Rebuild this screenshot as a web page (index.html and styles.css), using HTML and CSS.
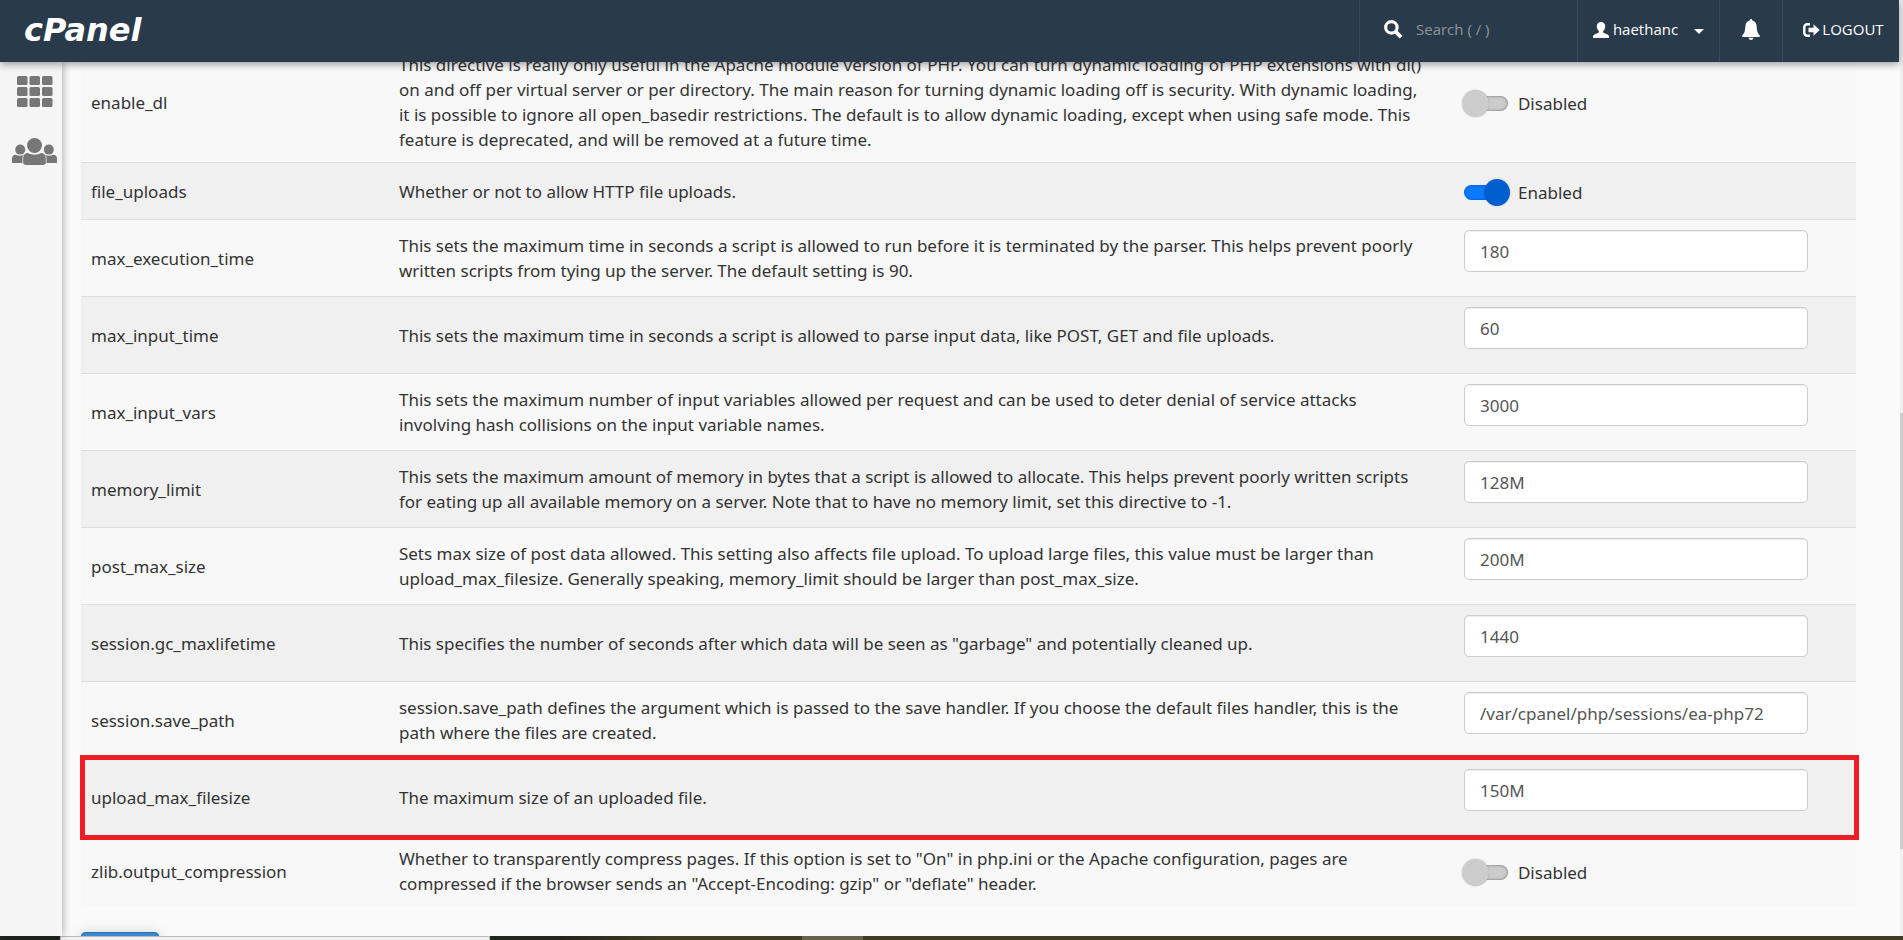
FILE: index.html
```html
<!DOCTYPE html>
<html lang="en">
<head>
<meta charset="utf-8">
<title>cPanel - MultiPHP INI Editor</title>
<link rel="stylesheet" href="styles.css">
</head>
<body>
<div class="window">
  <div class="app">
    <header class="topbar">
      <a class="logo" href="#">cPanel</a>
      <div class="search">
        <svg class="icon-search" viewBox="0 0 18 18" aria-hidden="true"><circle cx="7" cy="7" r="5.4" fill="none" stroke="#fff" stroke-width="3"/><path d="M11 11l5.2 5.2" stroke="#fff" stroke-width="3.6"/></svg>
        <input class="search-input" type="text" placeholder="Search ( / )" aria-label="Search">
      </div>
      <button class="nav-item user" type="button">
        <svg class="icon-user" viewBox="0 0 16 16" aria-hidden="true"><path fill="#fff" d="M8 0c2.600 0 4.200 1.700 4.200 4.300 0 2-.8 3.700-1.900 4.700-.4.400-.3 1.400.2 1.700l4 1.800c1 .5 1.500 1.200 1.500 2.200V16H0v-1.300c0-1 .5-1.700 1.500-2.200l4-1.800c.5-.3.6-1.300.2-1.700C4.600 8 3.800 6.300 3.800 4.300 3.800 1.700 5.400 0 8 0z"/></svg>
        <span class="user-name">haethanc</span>
        <span class="caret"></span>
      </button>
      <button class="nav-item bell" type="button" aria-label="Notifications">
        <svg class="icon-bell" viewBox="0 0 18 21" aria-hidden="true"><path fill="#fff" d="M9 0c.8 0 1.300.7 1.300 1.600C13 2.300 14.400 4.500 14.600 7c.3 4.500.7 6.800 2.900 9.200.8.900.5 1.800-.6 1.800H1.100C0 18-.3 17.100.5 16.200 2.700 13.800 3.100 11.500 3.400 7c.2-2.500 1.600-4.700 4.300-5.400C7.700.7 8.200 0 9 0zM6.600 18.800h4.800C11.200 20.200 10.200 21 9 21s-2.200-.8-2.400-2.200z"/></svg>
      </button>
      <a class="nav-item logout" href="#">
        <svg class="icon-logout" viewBox="0 0 17 14" aria-hidden="true"><path d="M7 1.300H4.200A2.900 2.900 0 0 0 1.300 4.200v5.600a2.900 2.900 0 0 0 2.900 2.900H7" fill="none" stroke="#fff" stroke-width="2.400"/><path fill="#fff" d="M5.500 4.700h5V1.300L16.700 7l-6.200 5.700V9.300h-5z"/></svg>
        <span>LOGOUT</span>
      </a>
    </header>
    <div class="body">
      <nav class="sidebar">
        <a class="side-link" href="#" aria-label="Home">
          <svg class="icon-grid" viewBox="0 0 36 31" aria-hidden="true"><g fill="#777"><rect width="10.500" height="9" rx="1.500"/><rect x="12.500" width="10.500" height="9" rx="1.500"/><rect x="25" width="10.500" height="9" rx="1.500"/><rect y="11" width="10.500" height="9" rx="1.500"/><rect x="12.500" y="11" width="10.500" height="9" rx="1.500"/><rect x="25" y="11" width="10.500" height="9" rx="1.500"/><rect y="22" width="10.500" height="9" rx="1.500"/><rect x="12.500" y="22" width="10.500" height="9" rx="1.500"/><rect x="25" y="22" width="10.500" height="9" rx="1.500"/></g></svg>
        </a>
        <a class="side-link" href="#" aria-label="User manager">
          <svg class="icon-people" viewBox="0 0 45 27" aria-hidden="true"><g fill="#777"><circle cx="8.200" cy="11.600" r="5"/><circle cx="36.800" cy="11.600" r="5"/><path d="M0 25v-4.500C0 18.300 1.500 16.700 3.700 16.700c2.600 1.400 5.600 1.500 8.300.1-1 1-1.400 2-1.500 3.200V25zM45 25v-4.500c0-2.200-1.500-3.800-3.700-3.800-2.600 1.400-5.600 1.500-8.300.1 1 1 1.400 2 1.500 3.200V25z"/><circle cx="22.500" cy="7.500" r="7.500"/><path d="M11.200 24.500V20c0-3 1.800-5 4.800-5 3.800 2.200 9.200 2.200 13 0 3 0 4.800 2 4.800 5v4.500c0 1.500-1 2.500-2.500 2.500H13.700c-1.500 0-2.500-1-2.500-2.500z"/></g></svg>
        </a>
      </nav>
      <main class="content">
        <table class="directives">
          <colgroup><col class="col-name"><col class="col-info"><col class="col-setting"></colgroup>
          <tbody>
            <tr>
              <td>enable_dl</td>
              <td class="info">This directive is really only useful in the Apache module version of PHP. You can turn dynamic loading of PHP extensions with dl() on and off per virtual server or per directory. The main reason for turning dynamic loading off is security. With dynamic loading, it is possible to ignore all open_basedir restrictions. The default is to allow dynamic loading, except when using safe mode. This feature is deprecated, and will be removed at a future time.</td>
              <td><label class="switch"><input class="toggle" type="checkbox">Disabled</label></td>
            </tr>
            <tr>
              <td>file_uploads</td>
              <td class="info">Whether or not to allow HTTP file uploads.</td>
              <td><label class="switch"><input class="toggle" type="checkbox" checked>Enabled</label></td>
            </tr>
            <tr>
              <td><label for="max_execution_time">max_execution_time</label></td>
              <td class="info">This sets the maximum time in seconds a script is allowed to run before it is terminated by the parser. This helps prevent poorly written scripts from tying up the server. The default setting is 90.</td>
              <td><input class="field" id="max_execution_time" type="text" value="180"></td>
            </tr>
            <tr>
              <td><label for="max_input_time">max_input_time</label></td>
              <td class="info">This sets the maximum time in seconds a script is allowed to parse input data, like POST, GET and file uploads.</td>
              <td><input class="field" id="max_input_time" type="text" value="60"></td>
            </tr>
            <tr>
              <td><label for="max_input_vars">max_input_vars</label></td>
              <td class="info">This sets the maximum number of input variables allowed per request and can be used to deter denial of service attacks involving hash collisions on the input variable names.</td>
              <td><input class="field" id="max_input_vars" type="text" value="3000"></td>
            </tr>
            <tr>
              <td><label for="memory_limit">memory_limit</label></td>
              <td class="info">This sets the maximum amount of memory in bytes that a script is allowed to allocate. This helps prevent poorly written scripts for eating up all available memory on a server. Note that to have no memory limit, set this directive to -1.</td>
              <td><input class="field" id="memory_limit" type="text" value="128M"></td>
            </tr>
            <tr>
              <td><label for="post_max_size">post_max_size</label></td>
              <td class="info">Sets max size of post data allowed. This setting also affects file upload. To upload large files, this value must be larger than upload_max_filesize. Generally speaking, memory_limit should be larger than post_max_size.</td>
              <td><input class="field" id="post_max_size" type="text" value="200M"></td>
            </tr>
            <tr>
              <td><label for="gc_maxlifetime">session.gc_maxlifetime</label></td>
              <td class="info">This specifies the number of seconds after which data will be seen as "garbage" and potentially cleaned up.</td>
              <td><input class="field" id="gc_maxlifetime" type="text" value="1440"></td>
            </tr>
            <tr>
              <td><label for="save_path">session.save_path</label></td>
              <td class="info">session.save_path defines the argument which is passed to the save handler. If you choose the default files handler, this is the path where the files are created.</td>
              <td><input class="field" id="save_path" type="text" value="/var/cpanel/php/sessions/ea-php72"></td>
            </tr>
            <tr class="highlighted">
              <td><label for="upload_max_filesize">upload_max_filesize</label></td>
              <td class="info">The maximum size of an uploaded file.</td>
              <td><input class="field" id="upload_max_filesize" type="text" value="150M"></td>
            </tr>
            <tr>
              <td>zlib.output_compression</td>
              <td class="info">Whether to transparently compress pages. If this option is set to "On" in php.ini or the Apache configuration, pages are compressed if the browser sends an "Accept-Encoding: gzip" or "deflate" header.</td>
              <td><label class="switch"><input class="toggle" type="checkbox">Disabled</label></td>
            </tr>
          </tbody>
        </table>
        <button class="apply" type="button" aria-label="Apply"></button>
      </main>
    </div>
  </div>
  <div class="scrollbar"><div class="thumb"></div></div>
</div>
<div class="taskbar"><div class="task-start"></div><div class="task-search"></div><div class="task-apps"><div class="task-active"></div></div></div>
</body>
</html>
```
FILE: styles.css
```css
* { box-sizing: border-box; }

body {
  margin: 0;
  height: 100vh;
  display: flex;
  flex-direction: column;
  overflow: hidden;
  background: #fafafa;
  color: #333;
  font-family: "Noto Sans", "Open Sans", sans-serif;
  font-size: 17px;
  line-height: 25px;
}

.window { flex: 1; min-height: 0; display: flex; }
.app { flex: 1; min-width: 0; display: flex; flex-direction: column; }

/* Top bar */
.topbar {
  position: relative;
  z-index: 2;
  flex: none;
  display: flex;
  align-items: stretch;
  height: 62px;
  margin-right: 1px;
  padding-left: 24px;
  background: #293a4a;
  box-shadow: 0 2px 8px rgba(0, 0, 0, 0.4);
  color: #fff;
  font-family: "Open Sans", sans-serif;
  font-size: 15px;
}
.logo {
  margin-right: auto;
  color: #fff;
  font: italic 700 32px/60px "DejaVu Sans", sans-serif;
  text-decoration: none;
}
.search {
  display: flex;
  align-items: center;
  width: 218px;
  padding: 0 12px 4px 24px;
  border-left: 1px solid #34495e;
}
.icon-search { flex: none; width: 19px; height: 19px; }
.search-input {
  width: 100%;
  margin-left: 13px;
  padding: 0;
  border: 0;
  background: none;
  color: #fff;
  font: inherit;
}
.search-input::placeholder { color: #8d959c; opacity: 1; }
.nav-item {
  display: flex;
  align-items: center;
  justify-content: center;
  padding: 0 0 3px;
  border: 0;
  border-left: 1px solid #34495e;
  background: none;
  color: #fff;
  font: inherit;
  text-decoration: none;
}
.user { width: 142px; }
.icon-user { width: 16px; height: 16px; }
.user-name { margin: 0 16px 0 4px; }
.caret {
  margin-top: 4px;
  border: 5px solid transparent;
  border-top-color: #fff;
  border-bottom: 0;
}
.bell { width: 63px; }
.icon-bell { width: 18px; height: 21px; }
.logout { width: 117px; gap: 2px; padding-left: 5px; }
.icon-logout { width: 17px; height: 14px; }

/* Page body */
.body { flex: 1; min-height: 0; display: flex; }
.sidebar {
  position: relative;
  z-index: 1;
  flex: none;
  width: 62px;
  display: flex;
  flex-direction: column;
  align-items: center;
  gap: 31px;
  padding: 14px 0 0 7px;
  background: #f5f5f5;
  box-shadow: 1px 0 8px rgba(0, 0, 0, 0.3);
}
.side-link { display: flex; }
.icon-grid { width: 36px; height: 31px; }
.icon-people { width: 45px; height: 27px; }

.content {
  flex: 1;
  min-width: 0;
  overflow: hidden;
  padding: 0 44px 0 19px;
}

.directives {
  width: 100%;
  margin-top: -21px;
  border-collapse: separate;
  border-spacing: 0;
  table-layout: fixed;
}
.col-name { width: 17.35%; }
.col-info { width: 60%; }
.col-setting { width: 22.65%; }
.directives td {
  padding: 10px;
  border-top: 1px solid #ddd;
  background: #f8f8f8;
  vertical-align: middle;
}
.directives .info { padding-right: 26px; }
.directives tr:nth-child(even) td { background: #f0f0f0; }

.field {
  display: block;
  width: 90%;
  height: 42px;
  margin-bottom: 14px;
  padding: 0 15px;
  border: 1px solid #ccc;
  border-radius: 5px;
  background: #fff;
  box-shadow: inset 0 1px 1px rgba(0, 0, 0, 0.075);
  color: #555;
  font: inherit;
}

.switch {
  display: flex;
  align-items: center;
  height: 36px;
  padding-top: 3px;
}
.toggle {
  appearance: none;
  position: relative;
  flex: none;
  width: 44px;
  height: 15px;
  margin: 0 10px 0 0;
  border-radius: 8px;
  background: #ccc;
  box-shadow: inset 0 0 3px rgba(0, 0, 0, 0.5);
}
.toggle::before {
  content: "";
  position: absolute;
  top: -6px;
  left: -2px;
  width: 27px;
  height: 27px;
  border-radius: 50%;
  background: #ccc;
  box-shadow: 0 0 2px rgba(0, 0, 0, 0.2);
}
.toggle:checked { background: #0a7aff; box-shadow: inset 0 0 3px rgba(0, 0, 80, 0.4); }
.toggle:checked::before { left: 20px; width: 26px; background: #005fcf; }

/* Callout frame around the upload size row */
.highlighted { position: relative; }
.highlighted::after {
  content: "";
  position: absolute;
  inset: -3px -3px -5px -1px;
  border: 5px solid #ee1c23;
  pointer-events: none;
}

.apply {
  display: block;
  width: 78px;
  height: 40px;
  margin-top: 26px;
  border: 1px solid #2a6fae;
  border-radius: 4px;
  background: #3788cf;
  box-shadow: 0 0 12px rgba(0, 0, 0, 0.15);
}

.scrollbar { flex: none; width: 3px; padding-top: 413px; background: #f0f0f0; }
.thumb { height: 436px; background: #cdcdcd; }

/* Desktop task bar */
.taskbar { flex: none; display: flex; height: 4px; }
.task-start { width: 60px; background: #1f281e; }
.task-search { width: 430px; border: 1px solid #bbb; border-bottom: 0; background: #f2f2f2; }
.task-apps { flex: 1; padding-left: 312px; background: linear-gradient(90deg, #1f281e, #26251b 5%, #3f3b25 12%, #3f3b28); }
.task-active { width: 61px; height: 4px; background: #66624f; }
```
